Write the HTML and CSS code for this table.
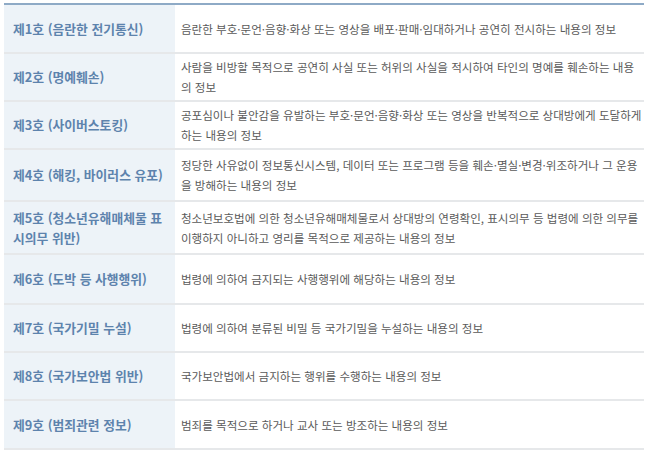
FILE: index.html
```html
<!DOCTYPE html>
<html lang="ko">
<head>
<meta charset="utf-8">
<link rel="stylesheet" href="styles.css">
</head>
<body>
<table class="law-table">
  <tbody>
    <tr class="r49">
      <th>제1호 (음란한 전기통신)</th>
      <td>음란한 부호·문언·음향·화상 또는 영상을 배포·판매·임대하거나 공연히 전시하는 내용의 정보</td>
    </tr>
    <tr class="r48">
      <th>제2호 (명예훼손)</th>
      <td>사람을 비방할 목적으로 공연히 사실 또는 허위의 사실을 적시하여 타인의 명예를 훼손하는 내용의 정보</td>
    </tr>
    <tr class="r48">
      <th>제3호 (사이버스토킹)</th>
      <td>공포심이나 불안감을 유발하는 부호·문언·음향·화상 또는 영상을 반복적으로 상대방에게 도달하게 하는 내용의 정보</td>
    </tr>
    <tr class="r52">
      <th>제4호 (해킹, 바이러스 유포)</th>
      <td>정당한 사유없이 정보통신시스템, 데이터 또는 프로그램 등을 훼손·멸실·변경·위조하거나 그 운용을 방해하는 내용의 정보</td>
    </tr>
    <tr class="r53">
      <th>제5호 (청소년유해매체물 표시의무 위반)</th>
      <td>청소년보호법에 의한 청소년유해매체물로서 상대방의 연령확인, 표시의무 등 법령에 의한 의무를 이행하지 아니하고 영리를 목적으로 제공하는 내용의 정보</td>
    </tr>
    <tr class="r50">
      <th>제6호 (도박 등 사행행위)</th>
      <td>법령에 의하여 금지되는 사행행위에 해당하는 내용의 정보</td>
    </tr>
    <tr class="r48">
      <th>제7호 (국가기밀 누설)</th>
      <td>법령에 의하여 분류된 비밀 등 국가기밀을 누설하는 내용의 정보</td>
    </tr>
    <tr class="r48">
      <th>제8호 (국가보안법 위반)</th>
      <td>국가보안법에서 금지하는 행위를 수행하는 내용의 정보</td>
    </tr>
    <tr class="r49">
      <th>제9호 (범죄관련 정보)</th>
      <td>범죄를 목적으로 하거나 교사 또는 방조하는 내용의 정보</td>
    </tr>
  </tbody>
</table>
</body>
</html>
```
FILE: styles.css
```css
html, body {
  margin: 0;
  padding: 0;
  background: #ffffff;
}

body {
  padding: 3px 6px 0 4px;
  font-family: "Noto Sans CJK KR", "Noto Sans", sans-serif;
}

.law-table {
  width: 640px;
  border-collapse: collapse;
  border-top: 2px solid #8eaac6;
  table-layout: fixed;
}

.law-table th,
.law-table td {
  border-bottom: 2px solid #e6e8ea;
  vertical-align: middle;
  line-height: 20px;
  padding: 3px 6px;
  word-break: normal;
}

.law-table th {
  width: 156px;
  background: #edf3f8;
  color: #5d83ad;
  font-size: 12.8px;
  font-weight: bold;
  text-align: left;
  padding-left: 9px;
  padding-right: 6px;
}

.law-table td {
  color: #5a5a5a;
  font-size: 11.55px;
  padding-left: 6px;
  padding-right: 1px;
}

.r48 { height: 48px; }
.r49 { height: 49px; }
.r50 { height: 50px; }
.r52 { height: 52px; }
.r53 { height: 53px; }
```
